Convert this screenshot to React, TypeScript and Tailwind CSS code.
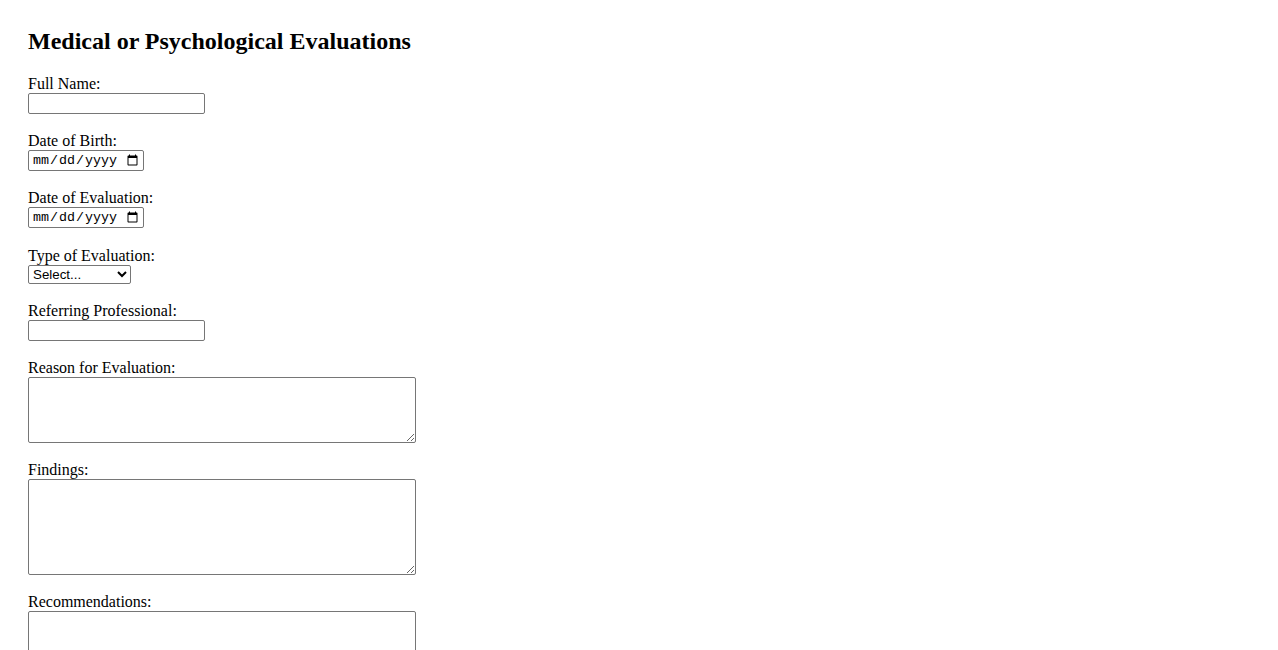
import { useState } from 'react'

const box = 'border border-[#767676] rounded-[2px] bg-white text-black'

export default function App() {
  const [form, setForm] = useState({
    fullName: '',
    dob: '',
    evalDate: '',
    evalType: '',
    referrer: '',
    reason: '',
    findings: '',
    recommendations: '',
  })

  const set = (k: keyof typeof form) => (e: any) => setForm({ ...form, [k]: e.target.value })

  return (
    <div className="min-h-screen bg-white text-black font-['Liberation_Serif',serif] px-[28px] pt-[27px] pb-10">
      <h2 className="text-[24px] leading-[28px] font-bold mb-[20px]">Medical or Psychological Evaluations</h2>
      <form className="flex flex-col items-start text-[16px]">
        <label className="block leading-[18px]">Full Name:</label>
        <input type="text" value={form.fullName} onChange={set('fullName')} className={`${box} w-[177px] h-[21px] px-[2px] text-[13.33px] font-['Liberation_Sans',sans-serif] mb-[18px]`} />

        <label className="block leading-[18px]">Date of Birth:</label>
        <input type="date" value={form.dob} onChange={set('dob')} className={`${box} w-[116px] h-[21px] pl-[3px] pr-[2px] text-[13.33px] font-['Liberation_Mono',monospace] mb-[18px]`} />

        <label className="block leading-[18px]">Date of Evaluation:</label>
        <input type="date" value={form.evalDate} onChange={set('evalDate')} className={`${box} w-[116px] h-[21px] pl-[3px] pr-[2px] text-[13.33px] font-['Liberation_Mono',monospace] mb-[19px]`} />

        <label className="block leading-[18px]">Type of Evaluation:</label>
        <select value={form.evalType} onChange={set('evalType')} className={`${box} w-[103px] h-[19px] text-[13.33px] leading-[15px] font-['Liberation_Sans',sans-serif] mb-[18px]`}>
          <option value="">Select...</option>
          <option value="medical">Medical</option>
          <option value="psychological">Psychological</option>
        </select>

        <label className="block leading-[18px]">Referring Professional:</label>
        <input type="text" value={form.referrer} onChange={set('referrer')} className={`${box} w-[177px] h-[21px] px-[2px] text-[13.33px] font-['Liberation_Sans',sans-serif] mb-[18px]`} />

        <label className="block leading-[18px]">Reason for Evaluation:</label>
        <textarea value={form.reason} onChange={set('reason')} className={`${box} w-[388px] h-[66px] p-[2px] text-[13.33px] font-['Liberation_Mono',monospace] mb-[18px]`} />

        <label className="block leading-[18px]">Findings:</label>
        <textarea value={form.findings} onChange={set('findings')} className={`${box} w-[388px] h-[96px] p-[2px] text-[13.33px] font-['Liberation_Mono',monospace] mb-[18px]`} />

        <label className="block leading-[18px]">Recommendations:</label>
        <textarea value={form.recommendations} onChange={set('recommendations')} className={`${box} w-[388px] h-[96px] p-[2px] text-[13.33px] font-['Liberation_Mono',monospace] mb-[18px]`} />
      </form>
    </div>
  )
}
